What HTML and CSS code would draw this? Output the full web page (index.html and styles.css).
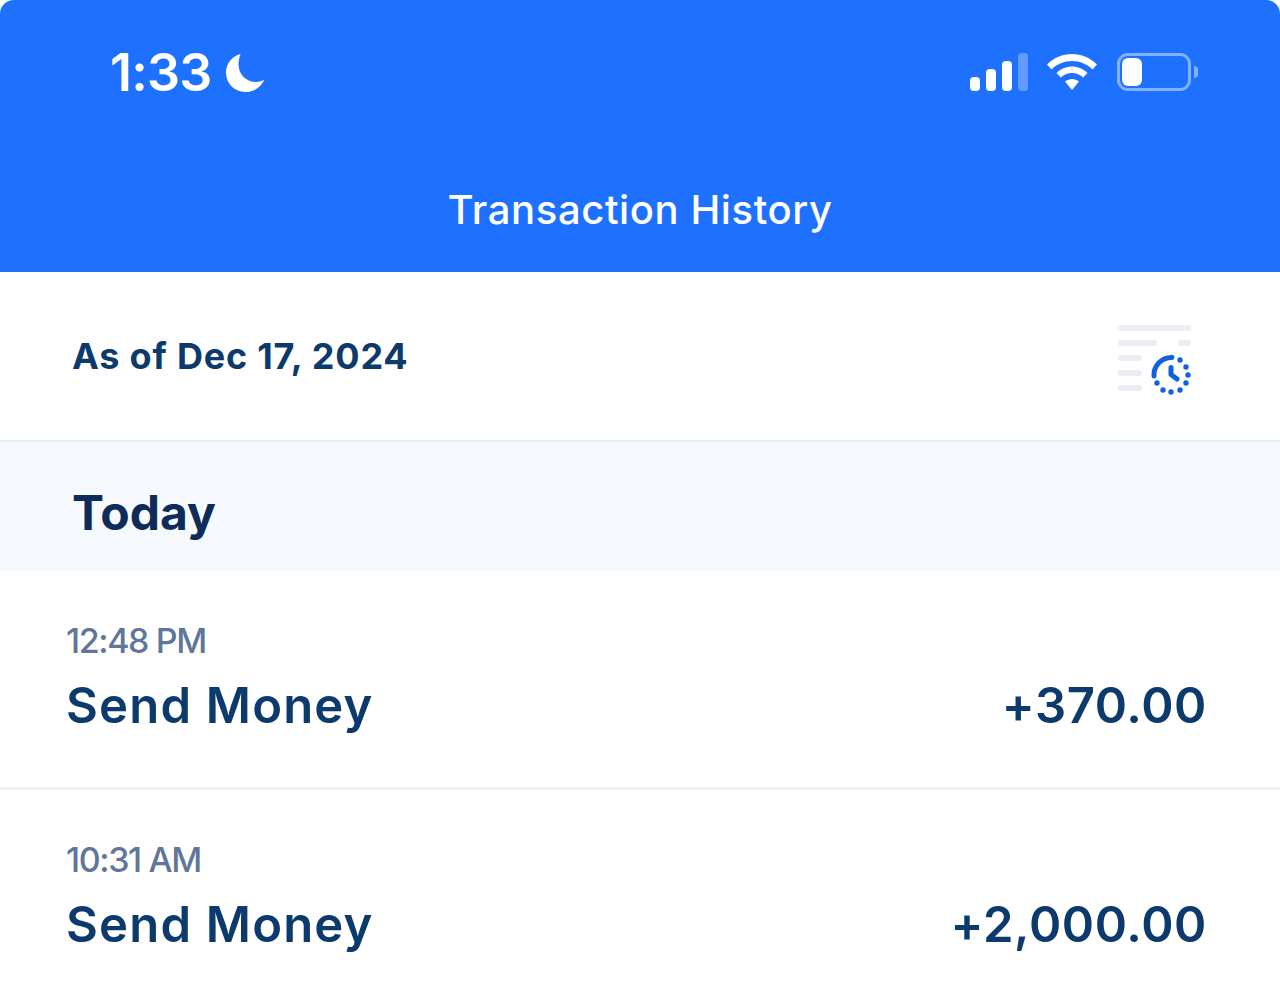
FILE: index.html
```html
<!DOCTYPE html>
<html lang="en">
<head>
<meta charset="utf-8">
<title>Transaction History</title>
<link rel="stylesheet" href="styles.css">
</head>
<body>
<main class="screen">
  <header class="header">
    <div class="status">
      <div class="status-left">
        <span class="clock">1:33</span>
        <svg class="moon" width="40" height="40" viewBox="0 0 40 40"><path fill="#fff" d="M15.500 1C7.500 3 1 10 1 19.500C1 30.500 9.500 39 20.500 39C29.500 39 36.500 33.500 39.500 26.500C37 28 34 29 31 29C21.500 29 13.500 21.500 13.500 11.500C13.500 7.500 14.500 4 15.500 1Z"/></svg>
      </div>
      <div class="status-right">
        <svg class="signal" width="58" height="38" viewBox="0 0 58 38"><rect x="0" y="24" width="10" height="14" rx="4" fill="#fff"/><rect x="16" y="16" width="10" height="22" rx="4" fill="#fff"/><rect x="32" y="8" width="10" height="30" rx="4" fill="#fff"/><rect x="48" y="0" width="10" height="38" rx="4" fill="#fff" fill-opacity=".3"/></svg>
        <svg class="wifi" width="50" height="36" viewBox="0 0 50 36"><path fill="#fff" d="M25 0C34.500 0 43 3.500 50 10.500L45.500 15.500C40 10 33 7 25 7C17 7 10 10 4.500 15.500L0 10.500C7 3.500 15.500 0 25 0Z"/><path fill="#fff" d="M25 12.500C31 12.500 36.500 15 40.500 19L36 23.500C33 20.500 29.500 19 25 19C20.500 19 17 20.500 14 23.500L9.500 19C13.500 15 19 12.500 25 12.500Z"/><path fill="#fff" d="M25 25C27.500 25 30 26 32 27.500L25 36L18 27.500C20 26 22.500 25 25 25Z"/></svg>
        <div class="battery">
          <div class="battery-body"><div class="battery-level"></div></div>
          <div class="battery-cap"></div>
        </div>
      </div>
    </div>
    <h1 class="title">Transaction History</h1>
  </header>

  <section class="as-of">
    <p class="as-of-text">As of Dec 17, 2024</p>
    <svg class="history-icon" width="74" height="72" viewBox="0 0 74 72">
      <g fill="#ebedf3">
        <rect x="0" y="0" width="73" height="6" rx="3"/>
        <rect x="0" y="15" width="39" height="6" rx="3"/>
        <rect x="60" y="15" width="13" height="6" rx="3"/>
        <rect x="0" y="30" width="24" height="6" rx="3"/>
        <rect x="0" y="45" width="24" height="6" rx="3"/>
        <rect x="0" y="60" width="24" height="6" rx="3"/>
      </g>
      <g fill="#1160e0">
        <path d="M36 51A17.500 17.500 0 0 1 54 32.500" fill="none" stroke="#1160e0" stroke-width="5" stroke-linecap="round"/>
        <path d="M53 42.500V49.500L59 54" fill="none" stroke="#1160e0" stroke-width="5" stroke-linecap="round" stroke-linejoin="round"/>
        <circle cx="62" cy="35" r="2.700"/><circle cx="68" cy="42" r="2.700"/><circle cx="70" cy="50" r="2.700"/><circle cx="68" cy="58" r="2.700"/><circle cx="62" cy="65" r="2.700"/><circle cx="53" cy="67" r="2.700"/><circle cx="45" cy="65" r="2.700"/><circle cx="39" cy="58" r="2.700"/>
      </g>
    </svg>
  </section>

  <h2 class="day">Today</h2>

  <ul class="list">
    <li class="row">
      <div class="row-main">
        <span class="time">12:48 PM</span>
        <span class="name">Send Money</span>
      </div>
      <span class="amount">+370.00</span>
    </li>
    <li class="row">
      <div class="row-main">
        <span class="time">10:31 AM</span>
        <span class="name">Send Money</span>
      </div>
      <span class="amount">+2,000.00</span>
    </li>
  </ul>
</main>
</body>
</html>
```

FILE: styles.css
```css
* { box-sizing: border-box; }
html, body { margin: 0; padding: 0; background: #fff; }
body { font-family: "Inter", "Liberation Sans", sans-serif; overflow: hidden; }
.screen { width: 1280px; height: 1001px; overflow: hidden; background: #fff; }

.header { height: 272px; background: #1d71fe; border-radius: 14px 14px 0 0; padding-top: 48px; display: flex; flex-direction: column; }
.status { height: 50px; padding: 0 82px 0 110px; display: flex; justify-content: space-between; align-items: center; }
.status-left { display: flex; align-items: center; gap: 13px; }
.clock { font-weight: 600; font-size: 52px; line-height: 50px; color: #fff; letter-spacing: -0.8px; }
.status-right { display: flex; align-items: center; gap: 19px; margin-top: -2px; }
.battery { display: flex; align-items: center; gap: 3px; margin-left: 1px; }
.battery-body { width: 74px; height: 38px; border: 3px solid rgba(255,255,255,.45); border-radius: 11px; padding: 2px; }
.battery-level { width: 20px; height: 100%; background: #fff; border-radius: 6px; }
.battery-cap { width: 4px; height: 12px; background: rgba(255,255,255,.45); border-radius: 0 6px 6px 0; }
.title { margin: 89px 0 0; font-size: 40px; line-height: 46px; font-weight: 500; color: #fff; text-align: center; letter-spacing: .6px; }

.as-of { height: 170px; border-bottom: 2px solid #e9edf3; padding: 53px 88px 0 72px; display: flex; justify-content: space-between; align-items: flex-start; }
.as-of-text { margin: 9px 0 0; font-size: 36px; line-height: 44px; font-weight: 700; color: #0c3a6c; letter-spacing: .8px; }

.day { margin: 0; height: 129px; background: #f6f9fd; padding: 41px 72px 0; font-size: 48px; line-height: 60px; font-weight: 700; color: #0e2b59; letter-spacing: 0; }

.list { list-style: none; margin: 0; padding: 0; }
.row { height: 219px; border-bottom: 3px solid #eef1f6; padding: 47px 73px 0 66px; display: flex; justify-content: space-between; align-items: flex-start; }
.row:last-child { border-bottom: 0; }
.row-main { display: flex; flex-direction: column; }
.time { font-size: 34px; line-height: 46px; font-weight: 500; color: #5f7699; letter-spacing: -1.4px; }
.name { margin-top: 13px; font-size: 49px; line-height: 58px; font-weight: 600; color: #0c3a6c; letter-spacing: 1.2px; }
.amount { margin-top: 59px; font-size: 49px; line-height: 58px; font-weight: 600; color: #0c3a6c; letter-spacing: .6px; }
```
